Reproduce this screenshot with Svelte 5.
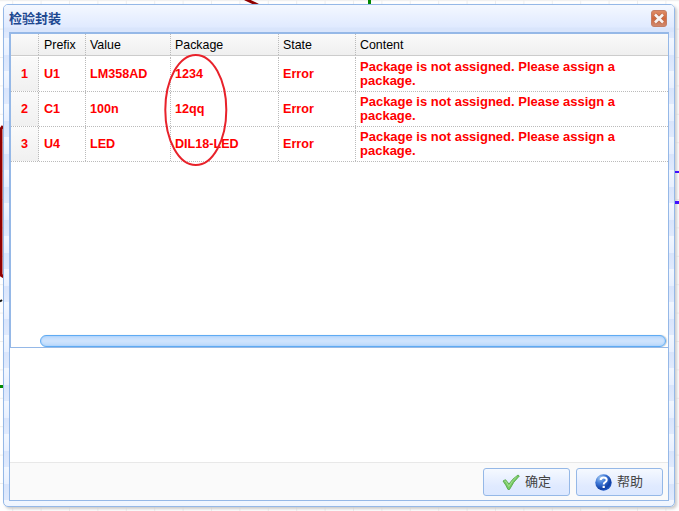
<script>
  const message = 'Package is not assigned. Please assign a package.';
  const rows = [
    ['U1', 'LM358AD', '1234'],
    ['C1', '100n', '12qq'],
    ['U4', 'LED', 'DIL18-LED'],
  ];
</script>

<div class="page">
  <svg class="canvas" width="679" height="511" viewBox="0 0 679 511">
    <defs>
      <pattern id="grid" x="69" y="57" width="28.4" height="28.4" patternUnits="userSpaceOnUse">
        <path d="M.5 0V28.4M0 .5H28.4" stroke="#eee" fill="none" />
      </pattern>
    </defs>
    <rect width="679" height="511" fill="url(#grid)" />
    <path d="M245-1L258 5M3 126L1 129V275L4 277" stroke="#900000" stroke-width="3" fill="none" />
    <path d="M369.5 0V5M0 386.5H5" stroke="#008800" stroke-width="3" />
    <path d="M0 301.500L2 300" stroke="#111" stroke-width="2" />
  </svg>

  <section class="window">
    <header>
      <h1>检验封装</h1>
      <button class="close" aria-label="Close">
        <svg width="16" height="17" viewBox="0 0 16 17">
          <defs><linearGradient id="cl" x1="0" y1="0" x2="0" y2="1"><stop stop-color="#df8e69" /><stop offset=".5" stop-color="#d1673c" /><stop offset="1" stop-color="#cf8b72" /></linearGradient></defs>
          <rect x=".5" y=".5" width="15" height="16" rx="2.500" fill="url(#cl)" stroke="#c47e66" />
          <path d="M4 4.500L12 12.500M12 4.500L4 12.500" stroke="#b56b50" stroke-width="4" />
          <path d="M4 4.500L12 12.500M12 4.500L4 12.500" stroke="#f8f4f3" stroke-width="2.600" />
        </svg>
      </button>
    </header>
    <div class="body">
      <div class="table">
        <div class="row head">
          <span></span><span>Prefix</span><span>Value</span><span>Package</span><span>State</span><span>Content</span>
        </div>
        {#each rows as row, i}
          <div class="row">
            <span class="num">{i + 1}</span>
            {#each row as cell}<span>{cell}</span>{/each}
            <span>Error</span>
            <span class="message">{message}</span>
          </div>
        {/each}
        <div class="space"></div>
        <div class="scroll"></div>
      </div>
      <div class="blank"></div>
      <footer>
        <button class="action">
          <svg width="18" height="17" viewBox="0 0 18 17">
            <path d="M1 7L3.500 5.700L7 10Q10 5 16 1L17.300 2Q11 8 7.500 15.500H6Q4 11 1 7Z" fill="#76cb62" stroke="#58a84c" stroke-width=".9" />
            <path d="M2.500 7L4 7.500L6.800 12.500Q10 6.500 14.500 3" stroke="#a4dd90" fill="none" />
          </svg>
          <span>确定</span>
        </button>
        <button class="action">
          <svg width="17" height="17" viewBox="0 0 17 17">
            <defs><radialGradient id="hp" cx=".3" cy=".22" r=".85"><stop stop-color="#9cc3ee" /><stop offset=".4" stop-color="#3f79d8" /><stop offset=".8" stop-color="#1240a4" /><stop offset="1" stop-color="#2562d0" /></radialGradient></defs>
            <circle cx="8.500" cy="8.500" r="8.200" fill="url(#hp)" />
            <path d="M5.700 6Q5.700 3.500 8.700 3.500Q11.700 3.500 11.700 6Q11.700 7.500 10 8.300Q8.700 9 8.700 10.500" stroke="#fff" stroke-width="2" fill="none" />
            <rect x="7.600" y="11.800" width="2.200" height="2.200" fill="#fff" />
          </svg>
          <span>帮助</span>
        </button>
      </footer>
    </div>
  </section>

  <svg class="canvas" width="679" height="511" viewBox="0 0 679 511">
    <path d="M675 172H679" stroke="#4010ff" stroke-width="2" />
    <path d="M675 202.500H679" stroke="#4010ff" stroke-width="3" />
    <ellipse cx="195.800" cy="110" rx="30.500" ry="55" fill="none" stroke="#e8222b" stroke-width="2" />
  </svg>
</div>

<style>
  .page {
    position: relative;
    width: 679px;
    height: 511px;
    overflow: hidden;
    box-sizing: border-box;
    padding: 4px 0 0 3px;
    background: #fff;
    font: 13px/14px "Liberation Sans", "Noto Sans CJK SC", sans-serif;
    color: #000;
  }
  .canvas { position: absolute; left: 0; top: 0; pointer-events: none; }
  .window {
    position: relative;
    box-sizing: border-box;
    width: 672px;
    height: 503px;
    display: flex;
    flex-direction: column;
    padding: 0 5px 5px;
    border: 1px solid #95b8e7;
    border-radius: 5px;
    box-shadow: 2px 2px 3px #ccc;
    background: repeating-linear-gradient(#f2f7ff 0, #e8f0ff 17px, #d9e5fc 17px, #e0eafd 33px);
  }
  header {
    height: 27px;
    flex: none;
    display: flex;
    justify-content: space-between;
    align-items: flex-start;
    margin: 0 -5px;
    padding: 0 7px 0 5px;
    border-radius: 4px 4px 0 0;
    background: linear-gradient(#f4f8ff 0, #e0eaff 22px, #d9e5fc 23px, #d9e5fc 27px);
  }
  h1 {
    margin: 4px 0 0;
    font: bold 13px/17px "Noto Sans CJK SC", sans-serif;
    color: #1c4790;
  }
  .close { padding: 0; margin-top: 5px; border: 0; background: none; height: 17px; }
  .close svg { display: block; }
  .body {
    flex: 1;
    min-height: 0;
    display: flex;
    flex-direction: column;
    border: 1px solid #95b8e7;
    background: #fff;
  }
  .table {
    height: 315px;
    box-sizing: border-box;
    flex: none;
    display: flex;
    flex-direction: column;
    border: 1px solid #95b8e7;
    border-right: 0;
  }
  .row {
    display: grid;
    grid-template-columns: 28px 47px 85px 108px 77px 1fr;
    height: 35px;
    flex: none;
    box-sizing: border-box;
    border-bottom: 1px dotted #bbb;
    color: #f00;
    font-size: 12.6px;
    font-weight: bold;
  }
  .row span {
    display: flex;
    align-items: center;
    padding-left: 4px;
    border-right: 1px dotted #bbb;
    white-space: nowrap;
  }
  .row span:nth-child(2) { padding-left: 5px; }
  .row span:last-child { border-right: 0; }
  .head {
    height: 22px;
    margin-bottom: 1px;
    border-bottom: 1px solid #ccc;
    color: #000;
    font-size: 12.4px;
    font-weight: normal;
    background: linear-gradient(#fafafa, #efefef);
  }
  .row .num { justify-content: center; padding: 0; background: linear-gradient(#fafafa, #f0f0f0); }
  .row .message { padding-right: 40px; white-space: normal; font-size: 13px; }
  .space { flex: 1; }
  .scroll {
    height: 12px;
    box-sizing: border-box;
    margin: 0 2px 0 29px;
    border: 1px solid #5fabf3;
    border-radius: 6px;
    background: linear-gradient(#bcdafc, #d0e4fd 50%, #bcdafb);
    box-shadow: inset 0 0 2px #93c6f9, 1px 0 1px #ccc;
  }
  .blank { flex: 1; }
  footer {
    height: 38px;
    box-sizing: border-box;
    display: flex;
    justify-content: flex-end;
    gap: 6px;
    padding: 5px 5px 0;
    border-top: 1px solid #e8e8e8;
    background: #fafafa;
  }
  .action {
    width: 87px;
    height: 28px;
    box-sizing: border-box;
    display: flex;
    align-items: center;
    gap: 5px;
    padding: 0 0 0 18px;
    border: 1px solid #95b8e7;
    border-radius: 3px;
    background: linear-gradient(#f5f9ff, #e0eaff 65%, #dce8ff);
    color: #444;
    font: 13px/26px "Noto Sans CJK SC", sans-serif;
  }
  .action span { position: relative; top: -1px; }
</style>
